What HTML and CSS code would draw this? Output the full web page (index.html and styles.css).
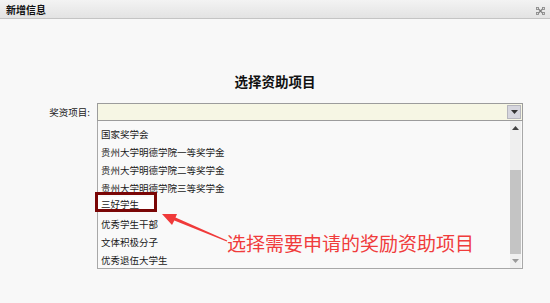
FILE: index.html
```html
<!DOCTYPE html>
<html lang="zh-CN">
<head>
    <meta charset="UTF-8">
    <title>新增信息</title>
    <link rel="stylesheet" href="styles.css">
</head>
<body>
    <div class="dialog">
        <div class="titlebar">
            <span class="title">新增信息</span>
            <svg class="close" width="9" height="8" viewBox="0 0 9 8">
                <path d="M2 1.5 L7 6.5 M7 1.5 L2 6.5" stroke="#7e7e7e" stroke-width="1.1" fill="none"/>
                <rect x="0.5" y="0.5" width="2" height="2" fill="none" stroke="#8e8e8e" stroke-width="0.9"/>
                <rect x="6.5" y="0.5" width="2" height="2" fill="none" stroke="#8e8e8e" stroke-width="0.9"/>
                <rect x="0.5" y="5.5" width="2" height="2" fill="none" stroke="#8e8e8e" stroke-width="0.9"/>
                <rect x="6.5" y="5.5" width="2" height="2" fill="none" stroke="#8e8e8e" stroke-width="0.9"/>
            </svg>
        </div>
        <div class="content">
            <h2 class="heading">选择资助项目</h2>
            <div class="field">
                <label class="field-label">奖资项目:</label>
                <div class="combo">
                    <div class="combo-input">
                        <span class="combo-btn">
                            <svg width="7" height="4" viewBox="0 0 7 4"><path d="M0 0 H7 L3.5 4 Z" fill="#333"/></svg>
                        </span>
                    </div>
                    <div class="combo-list">
                        <ul class="options">
                            <li>国家奖学会</li>
                            <li>贵州大学明德学院一等奖学金</li>
                            <li>贵州大学明德学院二等奖学金</li>
                            <li>贵州大学明德学院三等奖学金</li>
                            <li class="picked"><span>三好学生</span></li>
                            <li>优秀学生干部</li>
                            <li>文体积极分子</li>
                            <li>优秀退伍大学生</li>
                        </ul>
                        <div class="scrollbar">
                            <span class="sb-arrow"><svg width="7" height="4" viewBox="0 0 7 4"><path d="M0 4 H7 L3.5 0 Z" fill="#444"/></svg></span>
                            <div class="sb-track"><div class="sb-thumb"></div></div>
                            <span class="sb-arrow"><svg width="7" height="4" viewBox="0 0 7 4"><path d="M0 0 H7 L3.5 4 Z" fill="#999"/></svg></span>
                        </div>
                    </div>
                </div>
            </div>
        </div>

        <!-- annotation drawn over the list -->
        <div class="mark-box"></div>
        <svg class="mark-arrow" width="550" height="303" viewBox="0 0 550 303">
            <polygon points="162,214 177,214 175.5,217.5 227.3,240.5 226.7,241.5 174.3,220.5 172,225" fill="#f03a3a"/>
        </svg>
        <div class="mark-note">选择需要申请的奖励资助项目</div>
    </div>
</body>
</html>
```

FILE: styles.css
```css
*{
    margin: 0;
    padding: 0;
    box-sizing: border-box;
}
body{
    width: 550px;
    height: 303px;
    background-color: #f8f8f8;
    font-family: "Noto Sans CJK SC", "Noto Sans", sans-serif;
    color: #222;
    overflow: hidden;
}
.dialog{
    position: relative;
    height: 303px;
}
.titlebar{
    height: 19px;
    display: flex;
    align-items: center;
    justify-content: space-between;
    padding: 0 5px 0 6px;
    background: linear-gradient(#f3f3f3, #e3e3e3);
    border-bottom: 1px solid #c4c4c4;
}
.title{
    font-size: 10px;
    font-weight: bold;
    color: #111;
}
.close{
    margin-top: 4px;
}
.content{
    padding-top: 52px;
}
.heading{
    font-size: 13.5px;
    line-height: 20px;
    font-weight: bold;
    text-align: center;
    color: #111;
}
.field{
    display: flex;
    margin-top: 12px;
}
.field-label{
    width: 97px;
    padding: 3px 7px 0 0;
    text-align: right;
    font-size: 9.5px;
    line-height: 12px;
    color: #222;
}
.combo{
    width: 426px;
}
.combo-input{
    height: 18px;
    display: flex;
    justify-content: flex-end;
    align-items: center;
    padding-right: 1px;
    background-color: #f6f6e4;
    border: 1px solid #9c9c9c;
}
.combo-btn{
    width: 14px;
    height: 14px;
    display: flex;
    align-items: center;
    justify-content: center;
    background-color: #d6d6de;
    border: 1px solid #b6b6be;
}
.combo-list{
    height: 148px;
    display: flex;
    border: 1px solid #a8a8a8;
    border-top: none;
    background-color: #f9f9f9;
}
.options{
    flex: 1;
    list-style: none;
    padding: 4px 0 0 3px;
}
.options li{
    height: 18px;
    line-height: 18px;
    font-size: 9.5px;
    color: #1a1a1a;
}
.options .picked span{
    display: inline-block;
    width: 56px;
    height: 14px;
    line-height: 14px;
    margin-left: -3px;
    padding-left: 3px;
    vertical-align: top;
    background-color: #fff;
}
.scrollbar{
    width: 11px;
    margin-right: 1px;
    display: flex;
    flex-direction: column;
    background-color: #efefef;
}
.sb-arrow{
    height: 16px;
    display: flex;
    align-items: center;
    justify-content: center;
}
.sb-track{
    flex: 1;
    padding-top: 34px;
}
.sb-thumb{
    height: 84px;
    background-color: #c4c4c4;
}
.mark-box{
    position: absolute;
    left: 95px;
    top: 192px;
    width: 62px;
    height: 20px;
    border: 3px solid #7a0606;
}
.mark-arrow{
    position: absolute;
    left: 0;
    top: 0;
}
.mark-note{
    position: absolute;
    left: 227px;
    top: 231px;
    font-size: 19px;
    line-height: 24px;
    color: #f03c3c;
    white-space: nowrap;
}
```
